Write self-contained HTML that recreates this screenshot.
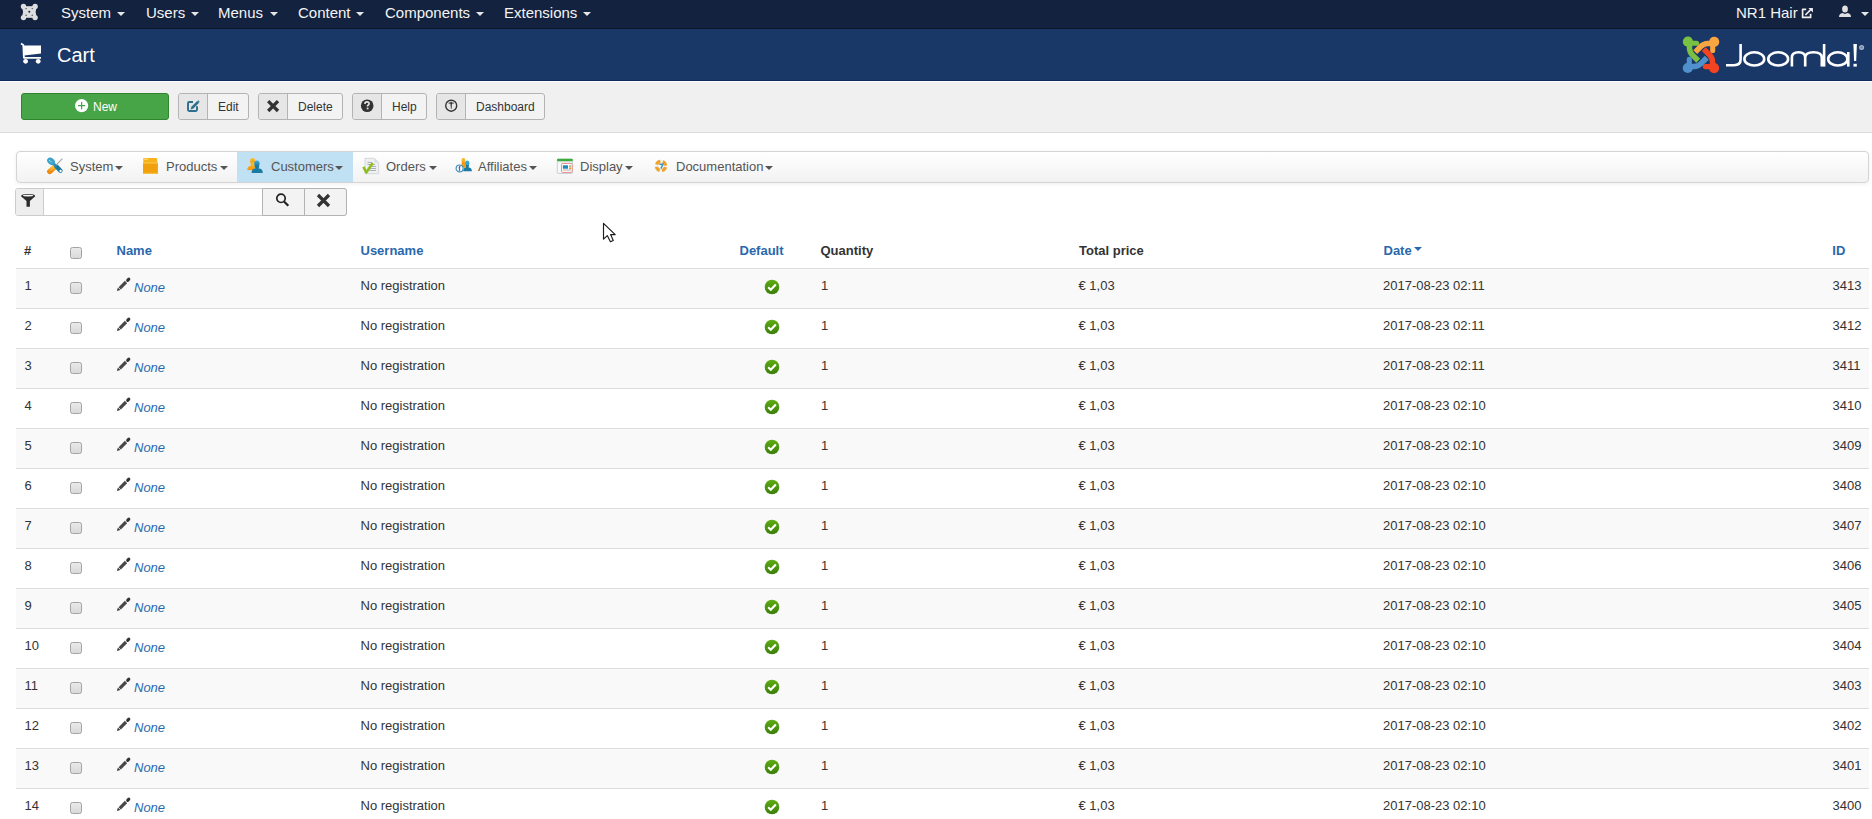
<!DOCTYPE html>
<html><head><meta charset="utf-8"><title>Cart</title>
<style>
html,body{margin:0;padding:0;}
body{width:1872px;height:819px;overflow:hidden;position:relative;background:#fff;font-family:"Liberation Sans", sans-serif;}
.t{position:absolute;white-space:nowrap;line-height:1;}
.caret{position:absolute;width:0;height:0;border-top:4px solid #000;border-left:4px solid transparent;border-right:4px solid transparent;}
.btn{position:absolute;border:1px solid #b3b3b3;border-radius:3px;background:#f3f3f3;}
svg{overflow:visible}
</style></head><body>
<div style="position:absolute;left:0;top:0;width:1872px;height:28px;background:#13223f"></div>
<div style="position:absolute;left:0;top:28px;width:1872px;height:1px;background:#0b1628"></div>
<svg style="position:absolute;left:0;top:0" width="60" height="28" viewBox="0 0 60 28"><rect x="22.4" y="6.2" width="13.8" height="11.6" fill="#dedede"/><circle cx="29.3" cy="1.5" r="4.6" fill="#13223f"/><circle cx="29.3" cy="22.5" r="4.6" fill="#13223f"/><circle cx="18.4" cy="12" r="4.6" fill="#13223f"/><circle cx="40.2" cy="12" r="4.6" fill="#13223f"/><circle cx="23.5" cy="6.4" r="2.7" fill="#dedede"/><circle cx="35.1" cy="6.4" r="2.7" fill="#dedede"/><circle cx="23.5" cy="17.6" r="2.7" fill="#dedede"/><circle cx="35.1" cy="17.6" r="2.7" fill="#dedede"/><circle cx="29.3" cy="11.8" r="1" fill="#13223f"/><circle cx="26.1" cy="8.6" r="0.7" fill="#13223f" opacity="0.8"/><circle cx="32.2" cy="8.6" r="0.7" fill="#13223f" opacity="0.8"/><circle cx="26.1" cy="15.2" r="0.7" fill="#13223f" opacity="0.8"/><circle cx="32.2" cy="15.2" r="0.7" fill="#13223f" opacity="0.8"/></svg>
<div class="t" style="left:61px;top:4.5px;font-size:15px;color:#f4f4f4;font-weight:normal;font-style:normal;">System</div>
<div class="caret" style="left:117px;top:12px;border-top-color:#e6e6e6"></div>
<div class="t" style="left:146px;top:4.5px;font-size:15px;color:#f4f4f4;font-weight:normal;font-style:normal;">Users</div>
<div class="caret" style="left:191px;top:12px;border-top-color:#e6e6e6"></div>
<div class="t" style="left:218px;top:4.5px;font-size:15px;color:#f4f4f4;font-weight:normal;font-style:normal;">Menus</div>
<div class="caret" style="left:270px;top:12px;border-top-color:#e6e6e6"></div>
<div class="t" style="left:298px;top:4.5px;font-size:15px;color:#f4f4f4;font-weight:normal;font-style:normal;">Content</div>
<div class="caret" style="left:356px;top:12px;border-top-color:#e6e6e6"></div>
<div class="t" style="left:385px;top:4.5px;font-size:15px;color:#f4f4f4;font-weight:normal;font-style:normal;">Components</div>
<div class="caret" style="left:476px;top:12px;border-top-color:#e6e6e6"></div>
<div class="t" style="left:504px;top:4.5px;font-size:15px;color:#f4f4f4;font-weight:normal;font-style:normal;">Extensions</div>
<div class="caret" style="left:583px;top:12px;border-top-color:#e6e6e6"></div>
<div class="t" style="left:1736px;top:5px;font-size:15px;color:#f4f4f4;font-weight:normal;font-style:normal;">NR1 Hair</div>
<svg style="position:absolute;left:1800px;top:6px" width="16" height="14" viewBox="0 0 16 14"><path d="M6.2 3.4 H2.6 V11.4 H10.6 V7.8" stroke="#eee" stroke-width="1.7" fill="none" stroke-linejoin="round"/><path d="M5.4 9 L11 3.4" stroke="#eee" stroke-width="1.7"/><path d="M8.4 1.9 H12.9 V6.4 Z" fill="#eee"/></svg>
<svg style="position:absolute;left:1838px;top:5px" width="15" height="13" viewBox="0 0 15 13"><ellipse cx="7" cy="4" rx="2.9" ry="3.6" fill="#e0e0e0"/><path d="M1 12 Q1 8.5 4.5 8 L7 9 L9.5 8 Q13 8.5 13 12 Z" fill="#e0e0e0"/></svg>
<div class="caret" style="left:1861px;top:12px;border-top-color:#e6e6e6"></div>
<div style="position:absolute;left:0;top:29px;width:1872px;height:51px;background:#1a3867"></div>
<div style="position:absolute;left:0;top:80px;width:1872px;height:1px;background:#0f2b5b"></div>
<div style="position:absolute;left:0;top:81px;width:1872px;height:1px;background:#fcfcfa"></div>
<svg style="position:absolute;left:18px;top:40px" width="26" height="26" viewBox="18 40 26 26"><path d="M21 43.5 L23.3 45 L23.8 56 L24 57.8 H41" stroke="#fff" stroke-width="1.8" fill="none" stroke-linejoin="round"/><path d="M23.3 45.5 H41 V53.5 L24 55.5 Z" fill="#fff"/><circle cx="25.6" cy="61.3" r="2.4" fill="#fff"/><circle cx="38.2" cy="61.3" r="2.4" fill="#fff"/></svg>
<div class="t" style="left:57px;top:45px;font-size:20px;color:#fff;font-weight:normal;font-style:normal;">Cart</div>
<svg style="position:absolute;left:1676px;top:29px" width="196" height="51" viewBox="1676 29 196 51"><g transform="translate(1701 54.9) scale(1.0)"><g transform="rotate(0)" fill="#7ac143" stroke="#7ac143"><circle cx="-13.1" cy="-13.2" r="5.1" stroke="none"/><path d="M-13 -11.7 L-4.4 -11.7" stroke-width="5.1" fill="none" stroke-linecap="round"/><path d="M-11.5 -13 L-11.5 -6.9 Q-11.5 -2.9 -8.67 -0.07 L-2.8 5.8" stroke-width="5.5" fill="none" stroke-linejoin="round"/></g><g transform="rotate(90)" fill="#f9a541" stroke="#f9a541"><circle cx="-13.1" cy="-13.2" r="5.1" stroke="none"/><path d="M-13 -11.7 L-4.4 -11.7" stroke-width="5.1" fill="none" stroke-linecap="round"/><path d="M-11.5 -13 L-11.5 -6.9 Q-11.5 -2.9 -8.67 -0.07 L-2.8 5.8" stroke-width="5.5" fill="none" stroke-linejoin="round"/></g><g transform="rotate(180)" fill="#f44321" stroke="#f44321"><circle cx="-13.1" cy="-13.2" r="5.1" stroke="none"/><path d="M-13 -11.7 L-4.4 -11.7" stroke-width="5.1" fill="none" stroke-linecap="round"/><path d="M-11.5 -13 L-11.5 -6.9 Q-11.5 -2.9 -8.67 -0.07 L-2.8 5.8" stroke-width="5.5" fill="none" stroke-linejoin="round"/></g><g transform="rotate(270)" fill="#5091cd" stroke="#5091cd"><circle cx="-13.1" cy="-13.2" r="5.1" stroke="none"/><path d="M-13 -11.7 L-4.4 -11.7" stroke-width="5.1" fill="none" stroke-linecap="round"/><path d="M-11.5 -13 L-11.5 -6.9 Q-11.5 -2.9 -8.67 -0.07 L-2.8 5.8" stroke-width="5.5" fill="none" stroke-linejoin="round"/></g></g><g stroke="#fff" fill="none" stroke-width="2.6"><path d="M1740.6 44 V59.5 Q1740.6 65.2 1734 65.2 H1726"/><ellipse cx="1754.3" cy="58.9" rx="9.9" ry="6.6"/><ellipse cx="1778.2" cy="58.9" rx="9.9" ry="6.6"/><path d="M1791.9 66.6 V57.5 Q1791.9 52.3 1798.5 52.3 Q1805.2 52.3 1805.2 57.5 V66.6 M1805.2 57.5 Q1805.2 52.3 1813.5 52.3 Q1821.8 52.3 1821.8 57.5 V66.6"/><path d="M1824.1 44 V66.6"/><ellipse cx="1837.8" cy="58.9" rx="9.6" ry="6.6"/><path d="M1848.3 52 V66.6"/></g><path d="M1853.4 44 H1856.9 L1856.2 61 H1854.1 Z" fill="#fff"/><rect x="1853.5" y="63.8" width="3.3" height="2.8" fill="#fff"/><circle cx="1861.6" cy="47.4" r="2.5" fill="#aab6c8"/><circle cx="1861.6" cy="47.4" r="1.2" fill="#6f819f"/></svg>
<div style="position:absolute;left:0;top:82px;width:1872px;height:50px;background:#f0f0f0"></div>
<div style="position:absolute;left:0;top:132px;width:1872px;height:1px;background:#dcdcdc"></div>
<div class="btn" style="left:21px;top:93px;width:146px;height:25px;background:#47a447;border-color:#30852f"></div>
<svg style="position:absolute;left:74px;top:98px" width="16" height="16" viewBox="0 0 16 16"><circle cx="7.6" cy="7.6" r="6.6" fill="#fff"/><path d="M4 7.6 H11.2 M7.6 4 V11.2" stroke="#47a447" stroke-width="1.2"/></svg>
<div class="t" style="left:93px;top:101px;font-size:12px;color:#fff;font-weight:normal;font-style:normal;">New</div>
<div class="btn" style="left:178px;top:93px;width:69px;height:25px"></div><div style="position:absolute;left:179px;top:94px;width:28px;height:25px;background:#e6e6e6;border-right:1px solid #b3b3b3;border-radius:3px 0 0 3px"></div><svg style="position:absolute;left:185px;top:99px" width="16" height="16" viewBox="0 0 16 16"><path d="M8 3 H4.2 Q3 3 3 4.2 V10.8 Q3 12 4.2 12 H10.8 Q12 12 12 10.8 V7.2" stroke="#2b6e8d" stroke-width="1.9" fill="none"/><path d="M7 9 L13.2 2.8" stroke="#2b6e8d" stroke-width="2.6"/><path d="M5.6 10.4 L6.2 8 L8 9.8 Z" fill="#2b6e8d"/><path d="M12.6 2 L13.3 1.3 L14.7 2.7 L14 3.4 Z" fill="#2b6e8d"/></svg><div class="t" style="left:218px;top:101px;font-size:12px;color:#333;font-weight:normal;font-style:normal;">Edit</div>
<div class="btn" style="left:258px;top:93px;width:83px;height:25px"></div><div style="position:absolute;left:259px;top:94px;width:28px;height:25px;background:#e6e6e6;border-right:1px solid #b3b3b3;border-radius:3px 0 0 3px"></div><svg style="position:absolute;left:265px;top:98px" width="16" height="16" viewBox="0 0 16 16"><path d="M3.2 3.2 L13 13 M13 3.2 L3.2 13" stroke="#333" stroke-width="3.3"/></svg><div class="t" style="left:298px;top:101px;font-size:12px;color:#333;font-weight:normal;font-style:normal;">Delete</div>
<div class="btn" style="left:352px;top:93px;width:73px;height:25px"></div><div style="position:absolute;left:353px;top:94px;width:28px;height:25px;background:#e6e6e6;border-right:1px solid #b3b3b3;border-radius:3px 0 0 3px"></div><svg style="position:absolute;left:359px;top:98px" width="16" height="16" viewBox="0 0 16 16"><circle cx="8.2" cy="7.8" r="6.3" fill="#333"/><path d="M5.9 6 Q5.9 3.9 8 3.9 Q10.1 3.9 10.1 5.8 Q10.1 7 8.6 7.6 V8.6" stroke="#e6e6e6" stroke-width="1.6" fill="none"/><rect x="7.7" y="9.6" width="1.8" height="1.7" fill="#e6e6e6"/></svg><div class="t" style="left:392px;top:101px;font-size:12px;color:#333;font-weight:normal;font-style:normal;">Help</div>
<div class="btn" style="left:436px;top:93px;width:107px;height:25px"></div><div style="position:absolute;left:437px;top:94px;width:28px;height:25px;background:#e6e6e6;border-right:1px solid #b3b3b3;border-radius:3px 0 0 3px"></div><svg style="position:absolute;left:443px;top:98px" width="16" height="16" viewBox="0 0 16 16"><circle cx="8.2" cy="7.7" r="5.5" stroke="#333" stroke-width="1.4" fill="none"/><path d="M5.6 5.1 H10.8" stroke="#333" stroke-width="1"/><circle cx="8.2" cy="4.5" r="0.8" fill="#333"/><path d="M7.4 5 H9 L8.5 11 H7.9 Z" fill="#333"/></svg><div class="t" style="left:476px;top:101px;font-size:12px;color:#333;font-weight:normal;font-style:normal;">Dashboard</div>
<div style="position:absolute;left:16px;top:151px;width:1851px;height:30px;border:1px solid #d4d4d4;border-radius:4px;background:linear-gradient(#ffffff,#f2f2f2);box-shadow:0 1px 4px rgba(0,0,0,0.065)"></div>
<div style="position:absolute;left:237px;top:152px;width:116px;height:30px;background:#c0e0f4"></div>
<svg style="position:absolute;left:47px;top:158px" width="16" height="16" viewBox="0 0 16 16"><defs><linearGradient id="scr" x1="0" y1="0" x2="0" y2="1"><stop offset="0" stop-color="#fbbd35"/><stop offset="1" stop-color="#ef870c"/></linearGradient></defs><path d="M2.7 13.5 L7.4 9.3" stroke="url(#scr)" stroke-width="5.2" stroke-linecap="round"/><path d="M2.8 13.2 L6.6 9.8" stroke="#fcd98a" stroke-width="0.7" stroke-dasharray="0.9 1.1"/><path d="M9.2 8.2 L13.5 12.8" stroke="#1c7aa0" stroke-width="4.3" stroke-linecap="round"/><path d="M5.5 4.8 L9.5 8.5" stroke="#2a8db5" stroke-width="2.8"/><ellipse cx="4" cy="3.3" rx="4.2" ry="3.2" transform="rotate(40 4 3.3)" fill="#3aa2cb"/><path d="M2.2 2.2 L4.6 4.2" stroke="#c5e6f3" stroke-width="1.1" stroke-dasharray="1 0.9"/><path d="M9.2 6.8 L15.4 0.6" stroke="#a5a5a5" stroke-width="1.1"/><circle cx="13.6" cy="13" r="1.15" fill="#fff"/></svg>
<div class="t" style="left:70px;top:160px;font-size:13px;color:#555;font-weight:normal;font-style:normal;">System</div>
<div class="caret" style="left:115px;top:166px;border-top-color:#555"></div>
<svg style="position:absolute;left:143px;top:158px" width="16" height="16" viewBox="0 0 16 16"><path d="M0.3 -0.1 H13.2 Q14.2 0 14.2 1.2 V5 H0.3 Z" fill="#f7b21e"/><rect x="0.9" y="0.6" width="4" height="1.4" fill="#fbd46a"/><path d="M0 4.6 H14.9 V15.9 H0 Z" fill="#f0a10d"/><rect x="0" y="4.4" width="14.9" height="1.2" fill="#fcc94a"/><rect x="0" y="14.8" width="14.9" height="1.1" fill="#f8c23c"/></svg>
<div class="t" style="left:166px;top:160px;font-size:13px;color:#555;font-weight:normal;font-style:normal;">Products</div>
<div class="caret" style="left:220px;top:166px;border-top-color:#555"></div>
<svg style="position:absolute;left:247px;top:158px" width="16" height="16" viewBox="0 0 16 16"><defs><linearGradient id="cbl" x1="0" y1="0" x2="0" y2="1"><stop offset="0" stop-color="#3bb0dc"/><stop offset="1" stop-color="#146e94"/></linearGradient><linearGradient id="cor" x1="0" y1="0" x2="0" y2="1"><stop offset="0" stop-color="#fbc02d"/><stop offset="1" stop-color="#f3930e"/></linearGradient></defs><ellipse cx="5.6" cy="2.9" rx="2.5" ry="2.8" fill="url(#cor)"/><path d="M3.5 4.5 Q2.8 6.5 4.2 7.6 Q0.3 8.3 0.2 12 L6 12.3 L8.5 9.5 Q7.8 7.8 7 7.6 Q8.4 6.5 7.7 4.5 Z" fill="url(#cor)"/><ellipse cx="9.9" cy="5.6" rx="2.7" ry="3.1" fill="url(#cbl)"/><path d="M7.8 7.5 Q7.4 9.3 8.6 10.2 Q4.6 10.6 4.6 14.9 H15.8 Q15.8 10.6 11.4 10.2 Q12.6 9.3 12 7.5 Z" fill="#1a7aa2"/></svg>
<div class="t" style="left:271px;top:160px;font-size:13px;color:#555;font-weight:normal;font-style:normal;">Customers</div>
<div class="caret" style="left:335px;top:166px;border-top-color:#555"></div>
<svg style="position:absolute;left:363px;top:158px" width="16" height="16" viewBox="0 0 16 16"><path d="M2 0.3 H11.5 L15.6 4.4 V15.7 H2 Z" fill="#eef0f2" stroke="#c6ccd1" stroke-width="0.7"/><path d="M11.5 0.3 V4.4 H15.6 Z" fill="#d5dde3"/><path d="M4.5 4.4 H9 M4.5 6.5 H12 M8 8.5 H13 M7 10.5 H13 M6.5 12.5 H13" stroke="#8d949a" stroke-width="0.7"/><path d="M0.4 8.8 L3.3 14.5 L9.7 5" stroke="#8fbe22" stroke-width="2.6" fill="none" stroke-linejoin="round"/></svg>
<div class="t" style="left:386px;top:160px;font-size:13px;color:#555;font-weight:normal;font-style:normal;">Orders</div>
<div class="caret" style="left:429px;top:166px;border-top-color:#555"></div>
<svg style="position:absolute;left:456px;top:158px" width="16" height="16" viewBox="0 0 16 16"><ellipse cx="7.4" cy="2.2" rx="1.9" ry="2.2" fill="#f8b626"/><path d="M5.8 3.5 Q5.2 6 6 8 L8.8 11 L9.2 6 Q9 4 8.5 3.5 Z" fill="#f39a12"/><ellipse cx="11.2" cy="5.2" rx="2.2" ry="2.6" fill="#34a6d3"/><path d="M9.4 7 Q9.2 8.5 10 9.2 Q7.2 9.8 7.2 13.2 H15.9 Q15.9 9.8 12.4 9.2 Q13.2 8.5 13 7 Z" fill="#1a7aa2"/><circle cx="3.6" cy="10.5" r="3.5" fill="#f7fafc" stroke="#3f8db8" stroke-width="1.1"/><path d="M4.6 8.6 Q2.4 8.6 3.2 10.3 Q4.6 11.6 2.6 12.6 M3.6 7.8 V13.4" stroke="#2a62a0" stroke-width="0.8" fill="none"/></svg>
<div class="t" style="left:478px;top:160px;font-size:13px;color:#555;font-weight:normal;font-style:normal;">Affiliates</div>
<div class="caret" style="left:529px;top:166px;border-top-color:#555"></div>
<svg style="position:absolute;left:557px;top:158px" width="16" height="16" viewBox="0 0 16 16"><rect x="0.3" y="1.2" width="15.3" height="14.3" rx="1" fill="#e9eef3" stroke="#b9c5ce" stroke-width="0.7"/><rect x="0" y="0.8" width="15.8" height="2.4" rx="1" fill="#3bab3b"/><rect x="1.2" y="4.5" width="2.4" height="10" fill="#fafafa"/><rect x="4.6" y="5.4" width="10.6" height="9" rx="1" fill="#fff" stroke="#ea8a8a" stroke-width="1"/><rect x="5.9" y="7.3" width="5.1" height="3.4" fill="#1f88bb"/><rect x="12" y="7.3" width="2" height="1.5" fill="#7cc361"/><rect x="12" y="9.4" width="2.2" height="1.6" fill="#f29a14"/><path d="M6 12 H14" stroke="#777" stroke-width="0.6"/></svg>
<div class="t" style="left:580px;top:160px;font-size:13px;color:#555;font-weight:normal;font-style:normal;">Display</div>
<div class="caret" style="left:625px;top:166px;border-top-color:#555"></div>
<svg style="position:absolute;left:653px;top:158px" width="16" height="16" viewBox="0 0 16 16"><circle cx="8" cy="8" r="4.6" stroke="#eef2f6" stroke-width="3.3" fill="none"/><circle cx="8" cy="8" r="4.6" stroke="#eea42a" stroke-width="3.3" stroke-dasharray="4.8 2.43" stroke-dashoffset="-1.2" fill="none"/><path d="M6.3 6.2 H9.9 L7.9 10.6" stroke="#3a93c6" stroke-width="1.5" fill="none"/></svg>
<div class="t" style="left:676px;top:160px;font-size:13px;color:#555;font-weight:normal;font-style:normal;">Documentation</div>
<div class="caret" style="left:765px;top:166px;border-top-color:#555"></div>
<div style="position:absolute;left:15px;top:188px;width:330px;height:26px;border:1px solid #ccc;border-radius:3px;background:#fff"></div>
<div style="position:absolute;left:16px;top:189px;width:27px;height:26px;background:#eee;border-right:1px solid #ccc;border-radius:3px 0 0 3px"></div>
<svg style="position:absolute;left:21px;top:194px" width="16" height="16" viewBox="0 0 16 16"><path d="M0 2.2 Q0 0 7.1 0 Q14.2 0 14.2 2.2 L8.9 7 V12.8 H5.5 V7 Z" fill="#2b2b2b"/><ellipse cx="7.1" cy="1.6" rx="5.2" ry="0.9" fill="#f5f5f5"/></svg>
<div style="position:absolute;left:262px;top:188px;width:83px;height:26px;border:1px solid #b3b3b3;border-radius:0 3px 3px 0;background:#f3f3f3"></div>
<div style="position:absolute;left:304px;top:189px;width:1px;height:26px;background:#b3b3b3"></div>
<svg style="position:absolute;left:274px;top:192px" width="18" height="18" viewBox="0 0 18 18"><circle cx="7" cy="6.3" r="4.2" stroke="#222" stroke-width="1.7" fill="none"/><path d="M10 9.5 L14.3 13.8" stroke="#222" stroke-width="2.2"/></svg>
<svg style="position:absolute;left:315px;top:192px" width="18" height="18" viewBox="0 0 18 18"><path d="M3 3 L14 14 M14 3 L3 14" stroke="#333" stroke-width="3.2"/></svg>
<svg style="position:absolute;left:590px;top:215px" width="40" height="35" viewBox="590 215 40 35"><path d="M603.5 223.3 V239.2 L607.3 235.6 L610.4 241.7 L613.3 240.4 L610.6 234.6 H615.2 Z" fill="#fff" stroke="#1c1c1c" stroke-width="1.15" stroke-linejoin="round"/></svg>
<div style="position:absolute;left:16px;top:268px;width:1853px;height:1px;background:#ddd"></div>
<div class="t" style="left:24px;top:243.8px;font-size:13px;color:#333;font-weight:bold;font-style:normal;">#</div>
<div style="position:absolute;left:70px;top:247px;width:10px;height:10px;border:1px solid #a3a3a3;border-radius:2.5px;background:linear-gradient(#e9e9e9,#dadada)"></div>
<div class="t" style="left:116.5px;top:243.8px;font-size:13px;color:#2a68ad;font-weight:bold;font-style:normal;">Name</div>
<div class="t" style="left:360.5px;top:243.8px;font-size:13px;color:#2a68ad;font-weight:bold;font-style:normal;">Username</div>
<div class="t" style="left:739.5px;top:243.8px;font-size:13px;color:#2a68ad;font-weight:bold;font-style:normal;">Default</div>
<div class="t" style="left:820.5px;top:243.8px;font-size:13px;color:#333;font-weight:bold;font-style:normal;">Quantity</div>
<div class="t" style="left:1079px;top:243.8px;font-size:13px;color:#333;font-weight:bold;font-style:normal;">Total price</div>
<div class="t" style="left:1383.5px;top:243.8px;font-size:13px;color:#2a68ad;font-weight:bold;font-style:normal;">Date</div>
<div class="caret" style="left:1414px;top:247px;border-top-color:#2a68ad"></div>
<div class="t" style="left:1832.3px;top:243.8px;font-size:13px;color:#2a68ad;font-weight:bold;font-style:normal;">ID</div>
<div style="position:absolute;left:16px;top:269px;width:1853px;height:39px;background:#f9f9f9"></div>
<div style="position:absolute;left:16px;top:308px;width:1853px;height:1px;background:#ddd"></div>
<div class="t" style="left:24.5px;top:279px;font-size:13px;color:#333;font-weight:normal;font-style:normal;">1</div>
<div style="position:absolute;left:70px;top:282px;width:10px;height:10px;border:1px solid #a3a3a3;border-radius:2.5px;background:linear-gradient(#e9e9e9,#dadada)"></div>
<svg style="position:absolute;left:116px;top:277px" width="15" height="15" viewBox="0 0 15 15"><path d="M0.9 14 L1.9 10.6 L4.4 13.1 Z" fill="#3a3a3a"/><path d="M3.72 11.28 L10 5" stroke="#484848" stroke-width="3.2"/><path d="M11.67 3.33 L12.8 2.2" stroke="#333" stroke-width="3.1" stroke-linecap="round"/></svg>
<div class="t" style="left:134px;top:281px;font-size:13px;color:#2a68ad;font-weight:normal;font-style:italic;">None</div>
<div class="t" style="left:360.5px;top:279px;font-size:13px;color:#333;font-weight:normal;font-style:normal;">No registration</div>
<svg style="position:absolute;left:764px;top:279px" width="16" height="16" viewBox="0 0 16 16"><defs><linearGradient id="g0" x1="0" y1="0" x2="0" y2="1"><stop offset="0" stop-color="#5eae12"/><stop offset="1" stop-color="#3a7d0b"/></linearGradient></defs><circle cx="8" cy="8" r="7.3" fill="url(#g0)"/><path d="M4.2 8.3 L6.8 10.7 L11.8 5.6" stroke="#fff" stroke-width="2.2" fill="none"/></svg>
<div class="t" style="left:821px;top:279px;font-size:13px;color:#333;font-weight:normal;font-style:normal;">1</div>
<div class="t" style="left:1078.5px;top:279px;font-size:13px;color:#333;font-weight:normal;font-style:normal;">&euro; 1,03</div>
<div class="t" style="left:1383px;top:279px;font-size:13px;color:#333;font-weight:normal;font-style:normal;">2017-08-23 02:11</div>
<div class="t" style="left:1832.5px;top:279px;font-size:13px;color:#333;font-weight:normal;font-style:normal;">3413</div>
<div style="position:absolute;left:16px;top:348px;width:1853px;height:1px;background:#ddd"></div>
<div class="t" style="left:24.5px;top:319px;font-size:13px;color:#333;font-weight:normal;font-style:normal;">2</div>
<div style="position:absolute;left:70px;top:322px;width:10px;height:10px;border:1px solid #a3a3a3;border-radius:2.5px;background:linear-gradient(#e9e9e9,#dadada)"></div>
<svg style="position:absolute;left:116px;top:317px" width="15" height="15" viewBox="0 0 15 15"><path d="M0.9 14 L1.9 10.6 L4.4 13.1 Z" fill="#3a3a3a"/><path d="M3.72 11.28 L10 5" stroke="#484848" stroke-width="3.2"/><path d="M11.67 3.33 L12.8 2.2" stroke="#333" stroke-width="3.1" stroke-linecap="round"/></svg>
<div class="t" style="left:134px;top:321px;font-size:13px;color:#2a68ad;font-weight:normal;font-style:italic;">None</div>
<div class="t" style="left:360.5px;top:319px;font-size:13px;color:#333;font-weight:normal;font-style:normal;">No registration</div>
<svg style="position:absolute;left:764px;top:319px" width="16" height="16" viewBox="0 0 16 16"><defs><linearGradient id="g1" x1="0" y1="0" x2="0" y2="1"><stop offset="0" stop-color="#5eae12"/><stop offset="1" stop-color="#3a7d0b"/></linearGradient></defs><circle cx="8" cy="8" r="7.3" fill="url(#g1)"/><path d="M4.2 8.3 L6.8 10.7 L11.8 5.6" stroke="#fff" stroke-width="2.2" fill="none"/></svg>
<div class="t" style="left:821px;top:319px;font-size:13px;color:#333;font-weight:normal;font-style:normal;">1</div>
<div class="t" style="left:1078.5px;top:319px;font-size:13px;color:#333;font-weight:normal;font-style:normal;">&euro; 1,03</div>
<div class="t" style="left:1383px;top:319px;font-size:13px;color:#333;font-weight:normal;font-style:normal;">2017-08-23 02:11</div>
<div class="t" style="left:1832.5px;top:319px;font-size:13px;color:#333;font-weight:normal;font-style:normal;">3412</div>
<div style="position:absolute;left:16px;top:349px;width:1853px;height:39px;background:#f9f9f9"></div>
<div style="position:absolute;left:16px;top:388px;width:1853px;height:1px;background:#ddd"></div>
<div class="t" style="left:24.5px;top:359px;font-size:13px;color:#333;font-weight:normal;font-style:normal;">3</div>
<div style="position:absolute;left:70px;top:362px;width:10px;height:10px;border:1px solid #a3a3a3;border-radius:2.5px;background:linear-gradient(#e9e9e9,#dadada)"></div>
<svg style="position:absolute;left:116px;top:357px" width="15" height="15" viewBox="0 0 15 15"><path d="M0.9 14 L1.9 10.6 L4.4 13.1 Z" fill="#3a3a3a"/><path d="M3.72 11.28 L10 5" stroke="#484848" stroke-width="3.2"/><path d="M11.67 3.33 L12.8 2.2" stroke="#333" stroke-width="3.1" stroke-linecap="round"/></svg>
<div class="t" style="left:134px;top:361px;font-size:13px;color:#2a68ad;font-weight:normal;font-style:italic;">None</div>
<div class="t" style="left:360.5px;top:359px;font-size:13px;color:#333;font-weight:normal;font-style:normal;">No registration</div>
<svg style="position:absolute;left:764px;top:359px" width="16" height="16" viewBox="0 0 16 16"><defs><linearGradient id="g2" x1="0" y1="0" x2="0" y2="1"><stop offset="0" stop-color="#5eae12"/><stop offset="1" stop-color="#3a7d0b"/></linearGradient></defs><circle cx="8" cy="8" r="7.3" fill="url(#g2)"/><path d="M4.2 8.3 L6.8 10.7 L11.8 5.6" stroke="#fff" stroke-width="2.2" fill="none"/></svg>
<div class="t" style="left:821px;top:359px;font-size:13px;color:#333;font-weight:normal;font-style:normal;">1</div>
<div class="t" style="left:1078.5px;top:359px;font-size:13px;color:#333;font-weight:normal;font-style:normal;">&euro; 1,03</div>
<div class="t" style="left:1383px;top:359px;font-size:13px;color:#333;font-weight:normal;font-style:normal;">2017-08-23 02:11</div>
<div class="t" style="left:1832.5px;top:359px;font-size:13px;color:#333;font-weight:normal;font-style:normal;">3411</div>
<div style="position:absolute;left:16px;top:428px;width:1853px;height:1px;background:#ddd"></div>
<div class="t" style="left:24.5px;top:399px;font-size:13px;color:#333;font-weight:normal;font-style:normal;">4</div>
<div style="position:absolute;left:70px;top:402px;width:10px;height:10px;border:1px solid #a3a3a3;border-radius:2.5px;background:linear-gradient(#e9e9e9,#dadada)"></div>
<svg style="position:absolute;left:116px;top:397px" width="15" height="15" viewBox="0 0 15 15"><path d="M0.9 14 L1.9 10.6 L4.4 13.1 Z" fill="#3a3a3a"/><path d="M3.72 11.28 L10 5" stroke="#484848" stroke-width="3.2"/><path d="M11.67 3.33 L12.8 2.2" stroke="#333" stroke-width="3.1" stroke-linecap="round"/></svg>
<div class="t" style="left:134px;top:401px;font-size:13px;color:#2a68ad;font-weight:normal;font-style:italic;">None</div>
<div class="t" style="left:360.5px;top:399px;font-size:13px;color:#333;font-weight:normal;font-style:normal;">No registration</div>
<svg style="position:absolute;left:764px;top:399px" width="16" height="16" viewBox="0 0 16 16"><defs><linearGradient id="g3" x1="0" y1="0" x2="0" y2="1"><stop offset="0" stop-color="#5eae12"/><stop offset="1" stop-color="#3a7d0b"/></linearGradient></defs><circle cx="8" cy="8" r="7.3" fill="url(#g3)"/><path d="M4.2 8.3 L6.8 10.7 L11.8 5.6" stroke="#fff" stroke-width="2.2" fill="none"/></svg>
<div class="t" style="left:821px;top:399px;font-size:13px;color:#333;font-weight:normal;font-style:normal;">1</div>
<div class="t" style="left:1078.5px;top:399px;font-size:13px;color:#333;font-weight:normal;font-style:normal;">&euro; 1,03</div>
<div class="t" style="left:1383px;top:399px;font-size:13px;color:#333;font-weight:normal;font-style:normal;">2017-08-23 02:10</div>
<div class="t" style="left:1832.5px;top:399px;font-size:13px;color:#333;font-weight:normal;font-style:normal;">3410</div>
<div style="position:absolute;left:16px;top:429px;width:1853px;height:39px;background:#f9f9f9"></div>
<div style="position:absolute;left:16px;top:468px;width:1853px;height:1px;background:#ddd"></div>
<div class="t" style="left:24.5px;top:439px;font-size:13px;color:#333;font-weight:normal;font-style:normal;">5</div>
<div style="position:absolute;left:70px;top:442px;width:10px;height:10px;border:1px solid #a3a3a3;border-radius:2.5px;background:linear-gradient(#e9e9e9,#dadada)"></div>
<svg style="position:absolute;left:116px;top:437px" width="15" height="15" viewBox="0 0 15 15"><path d="M0.9 14 L1.9 10.6 L4.4 13.1 Z" fill="#3a3a3a"/><path d="M3.72 11.28 L10 5" stroke="#484848" stroke-width="3.2"/><path d="M11.67 3.33 L12.8 2.2" stroke="#333" stroke-width="3.1" stroke-linecap="round"/></svg>
<div class="t" style="left:134px;top:441px;font-size:13px;color:#2a68ad;font-weight:normal;font-style:italic;">None</div>
<div class="t" style="left:360.5px;top:439px;font-size:13px;color:#333;font-weight:normal;font-style:normal;">No registration</div>
<svg style="position:absolute;left:764px;top:439px" width="16" height="16" viewBox="0 0 16 16"><defs><linearGradient id="g4" x1="0" y1="0" x2="0" y2="1"><stop offset="0" stop-color="#5eae12"/><stop offset="1" stop-color="#3a7d0b"/></linearGradient></defs><circle cx="8" cy="8" r="7.3" fill="url(#g4)"/><path d="M4.2 8.3 L6.8 10.7 L11.8 5.6" stroke="#fff" stroke-width="2.2" fill="none"/></svg>
<div class="t" style="left:821px;top:439px;font-size:13px;color:#333;font-weight:normal;font-style:normal;">1</div>
<div class="t" style="left:1078.5px;top:439px;font-size:13px;color:#333;font-weight:normal;font-style:normal;">&euro; 1,03</div>
<div class="t" style="left:1383px;top:439px;font-size:13px;color:#333;font-weight:normal;font-style:normal;">2017-08-23 02:10</div>
<div class="t" style="left:1832.5px;top:439px;font-size:13px;color:#333;font-weight:normal;font-style:normal;">3409</div>
<div style="position:absolute;left:16px;top:508px;width:1853px;height:1px;background:#ddd"></div>
<div class="t" style="left:24.5px;top:479px;font-size:13px;color:#333;font-weight:normal;font-style:normal;">6</div>
<div style="position:absolute;left:70px;top:482px;width:10px;height:10px;border:1px solid #a3a3a3;border-radius:2.5px;background:linear-gradient(#e9e9e9,#dadada)"></div>
<svg style="position:absolute;left:116px;top:477px" width="15" height="15" viewBox="0 0 15 15"><path d="M0.9 14 L1.9 10.6 L4.4 13.1 Z" fill="#3a3a3a"/><path d="M3.72 11.28 L10 5" stroke="#484848" stroke-width="3.2"/><path d="M11.67 3.33 L12.8 2.2" stroke="#333" stroke-width="3.1" stroke-linecap="round"/></svg>
<div class="t" style="left:134px;top:481px;font-size:13px;color:#2a68ad;font-weight:normal;font-style:italic;">None</div>
<div class="t" style="left:360.5px;top:479px;font-size:13px;color:#333;font-weight:normal;font-style:normal;">No registration</div>
<svg style="position:absolute;left:764px;top:479px" width="16" height="16" viewBox="0 0 16 16"><defs><linearGradient id="g5" x1="0" y1="0" x2="0" y2="1"><stop offset="0" stop-color="#5eae12"/><stop offset="1" stop-color="#3a7d0b"/></linearGradient></defs><circle cx="8" cy="8" r="7.3" fill="url(#g5)"/><path d="M4.2 8.3 L6.8 10.7 L11.8 5.6" stroke="#fff" stroke-width="2.2" fill="none"/></svg>
<div class="t" style="left:821px;top:479px;font-size:13px;color:#333;font-weight:normal;font-style:normal;">1</div>
<div class="t" style="left:1078.5px;top:479px;font-size:13px;color:#333;font-weight:normal;font-style:normal;">&euro; 1,03</div>
<div class="t" style="left:1383px;top:479px;font-size:13px;color:#333;font-weight:normal;font-style:normal;">2017-08-23 02:10</div>
<div class="t" style="left:1832.5px;top:479px;font-size:13px;color:#333;font-weight:normal;font-style:normal;">3408</div>
<div style="position:absolute;left:16px;top:509px;width:1853px;height:39px;background:#f9f9f9"></div>
<div style="position:absolute;left:16px;top:548px;width:1853px;height:1px;background:#ddd"></div>
<div class="t" style="left:24.5px;top:519px;font-size:13px;color:#333;font-weight:normal;font-style:normal;">7</div>
<div style="position:absolute;left:70px;top:522px;width:10px;height:10px;border:1px solid #a3a3a3;border-radius:2.5px;background:linear-gradient(#e9e9e9,#dadada)"></div>
<svg style="position:absolute;left:116px;top:517px" width="15" height="15" viewBox="0 0 15 15"><path d="M0.9 14 L1.9 10.6 L4.4 13.1 Z" fill="#3a3a3a"/><path d="M3.72 11.28 L10 5" stroke="#484848" stroke-width="3.2"/><path d="M11.67 3.33 L12.8 2.2" stroke="#333" stroke-width="3.1" stroke-linecap="round"/></svg>
<div class="t" style="left:134px;top:521px;font-size:13px;color:#2a68ad;font-weight:normal;font-style:italic;">None</div>
<div class="t" style="left:360.5px;top:519px;font-size:13px;color:#333;font-weight:normal;font-style:normal;">No registration</div>
<svg style="position:absolute;left:764px;top:519px" width="16" height="16" viewBox="0 0 16 16"><defs><linearGradient id="g6" x1="0" y1="0" x2="0" y2="1"><stop offset="0" stop-color="#5eae12"/><stop offset="1" stop-color="#3a7d0b"/></linearGradient></defs><circle cx="8" cy="8" r="7.3" fill="url(#g6)"/><path d="M4.2 8.3 L6.8 10.7 L11.8 5.6" stroke="#fff" stroke-width="2.2" fill="none"/></svg>
<div class="t" style="left:821px;top:519px;font-size:13px;color:#333;font-weight:normal;font-style:normal;">1</div>
<div class="t" style="left:1078.5px;top:519px;font-size:13px;color:#333;font-weight:normal;font-style:normal;">&euro; 1,03</div>
<div class="t" style="left:1383px;top:519px;font-size:13px;color:#333;font-weight:normal;font-style:normal;">2017-08-23 02:10</div>
<div class="t" style="left:1832.5px;top:519px;font-size:13px;color:#333;font-weight:normal;font-style:normal;">3407</div>
<div style="position:absolute;left:16px;top:588px;width:1853px;height:1px;background:#ddd"></div>
<div class="t" style="left:24.5px;top:559px;font-size:13px;color:#333;font-weight:normal;font-style:normal;">8</div>
<div style="position:absolute;left:70px;top:562px;width:10px;height:10px;border:1px solid #a3a3a3;border-radius:2.5px;background:linear-gradient(#e9e9e9,#dadada)"></div>
<svg style="position:absolute;left:116px;top:557px" width="15" height="15" viewBox="0 0 15 15"><path d="M0.9 14 L1.9 10.6 L4.4 13.1 Z" fill="#3a3a3a"/><path d="M3.72 11.28 L10 5" stroke="#484848" stroke-width="3.2"/><path d="M11.67 3.33 L12.8 2.2" stroke="#333" stroke-width="3.1" stroke-linecap="round"/></svg>
<div class="t" style="left:134px;top:561px;font-size:13px;color:#2a68ad;font-weight:normal;font-style:italic;">None</div>
<div class="t" style="left:360.5px;top:559px;font-size:13px;color:#333;font-weight:normal;font-style:normal;">No registration</div>
<svg style="position:absolute;left:764px;top:559px" width="16" height="16" viewBox="0 0 16 16"><defs><linearGradient id="g7" x1="0" y1="0" x2="0" y2="1"><stop offset="0" stop-color="#5eae12"/><stop offset="1" stop-color="#3a7d0b"/></linearGradient></defs><circle cx="8" cy="8" r="7.3" fill="url(#g7)"/><path d="M4.2 8.3 L6.8 10.7 L11.8 5.6" stroke="#fff" stroke-width="2.2" fill="none"/></svg>
<div class="t" style="left:821px;top:559px;font-size:13px;color:#333;font-weight:normal;font-style:normal;">1</div>
<div class="t" style="left:1078.5px;top:559px;font-size:13px;color:#333;font-weight:normal;font-style:normal;">&euro; 1,03</div>
<div class="t" style="left:1383px;top:559px;font-size:13px;color:#333;font-weight:normal;font-style:normal;">2017-08-23 02:10</div>
<div class="t" style="left:1832.5px;top:559px;font-size:13px;color:#333;font-weight:normal;font-style:normal;">3406</div>
<div style="position:absolute;left:16px;top:589px;width:1853px;height:39px;background:#f9f9f9"></div>
<div style="position:absolute;left:16px;top:628px;width:1853px;height:1px;background:#ddd"></div>
<div class="t" style="left:24.5px;top:599px;font-size:13px;color:#333;font-weight:normal;font-style:normal;">9</div>
<div style="position:absolute;left:70px;top:602px;width:10px;height:10px;border:1px solid #a3a3a3;border-radius:2.5px;background:linear-gradient(#e9e9e9,#dadada)"></div>
<svg style="position:absolute;left:116px;top:597px" width="15" height="15" viewBox="0 0 15 15"><path d="M0.9 14 L1.9 10.6 L4.4 13.1 Z" fill="#3a3a3a"/><path d="M3.72 11.28 L10 5" stroke="#484848" stroke-width="3.2"/><path d="M11.67 3.33 L12.8 2.2" stroke="#333" stroke-width="3.1" stroke-linecap="round"/></svg>
<div class="t" style="left:134px;top:601px;font-size:13px;color:#2a68ad;font-weight:normal;font-style:italic;">None</div>
<div class="t" style="left:360.5px;top:599px;font-size:13px;color:#333;font-weight:normal;font-style:normal;">No registration</div>
<svg style="position:absolute;left:764px;top:599px" width="16" height="16" viewBox="0 0 16 16"><defs><linearGradient id="g8" x1="0" y1="0" x2="0" y2="1"><stop offset="0" stop-color="#5eae12"/><stop offset="1" stop-color="#3a7d0b"/></linearGradient></defs><circle cx="8" cy="8" r="7.3" fill="url(#g8)"/><path d="M4.2 8.3 L6.8 10.7 L11.8 5.6" stroke="#fff" stroke-width="2.2" fill="none"/></svg>
<div class="t" style="left:821px;top:599px;font-size:13px;color:#333;font-weight:normal;font-style:normal;">1</div>
<div class="t" style="left:1078.5px;top:599px;font-size:13px;color:#333;font-weight:normal;font-style:normal;">&euro; 1,03</div>
<div class="t" style="left:1383px;top:599px;font-size:13px;color:#333;font-weight:normal;font-style:normal;">2017-08-23 02:10</div>
<div class="t" style="left:1832.5px;top:599px;font-size:13px;color:#333;font-weight:normal;font-style:normal;">3405</div>
<div style="position:absolute;left:16px;top:668px;width:1853px;height:1px;background:#ddd"></div>
<div class="t" style="left:24.5px;top:639px;font-size:13px;color:#333;font-weight:normal;font-style:normal;">10</div>
<div style="position:absolute;left:70px;top:642px;width:10px;height:10px;border:1px solid #a3a3a3;border-radius:2.5px;background:linear-gradient(#e9e9e9,#dadada)"></div>
<svg style="position:absolute;left:116px;top:637px" width="15" height="15" viewBox="0 0 15 15"><path d="M0.9 14 L1.9 10.6 L4.4 13.1 Z" fill="#3a3a3a"/><path d="M3.72 11.28 L10 5" stroke="#484848" stroke-width="3.2"/><path d="M11.67 3.33 L12.8 2.2" stroke="#333" stroke-width="3.1" stroke-linecap="round"/></svg>
<div class="t" style="left:134px;top:641px;font-size:13px;color:#2a68ad;font-weight:normal;font-style:italic;">None</div>
<div class="t" style="left:360.5px;top:639px;font-size:13px;color:#333;font-weight:normal;font-style:normal;">No registration</div>
<svg style="position:absolute;left:764px;top:639px" width="16" height="16" viewBox="0 0 16 16"><defs><linearGradient id="g9" x1="0" y1="0" x2="0" y2="1"><stop offset="0" stop-color="#5eae12"/><stop offset="1" stop-color="#3a7d0b"/></linearGradient></defs><circle cx="8" cy="8" r="7.3" fill="url(#g9)"/><path d="M4.2 8.3 L6.8 10.7 L11.8 5.6" stroke="#fff" stroke-width="2.2" fill="none"/></svg>
<div class="t" style="left:821px;top:639px;font-size:13px;color:#333;font-weight:normal;font-style:normal;">1</div>
<div class="t" style="left:1078.5px;top:639px;font-size:13px;color:#333;font-weight:normal;font-style:normal;">&euro; 1,03</div>
<div class="t" style="left:1383px;top:639px;font-size:13px;color:#333;font-weight:normal;font-style:normal;">2017-08-23 02:10</div>
<div class="t" style="left:1832.5px;top:639px;font-size:13px;color:#333;font-weight:normal;font-style:normal;">3404</div>
<div style="position:absolute;left:16px;top:669px;width:1853px;height:39px;background:#f9f9f9"></div>
<div style="position:absolute;left:16px;top:708px;width:1853px;height:1px;background:#ddd"></div>
<div class="t" style="left:24.5px;top:679px;font-size:13px;color:#333;font-weight:normal;font-style:normal;">11</div>
<div style="position:absolute;left:70px;top:682px;width:10px;height:10px;border:1px solid #a3a3a3;border-radius:2.5px;background:linear-gradient(#e9e9e9,#dadada)"></div>
<svg style="position:absolute;left:116px;top:677px" width="15" height="15" viewBox="0 0 15 15"><path d="M0.9 14 L1.9 10.6 L4.4 13.1 Z" fill="#3a3a3a"/><path d="M3.72 11.28 L10 5" stroke="#484848" stroke-width="3.2"/><path d="M11.67 3.33 L12.8 2.2" stroke="#333" stroke-width="3.1" stroke-linecap="round"/></svg>
<div class="t" style="left:134px;top:681px;font-size:13px;color:#2a68ad;font-weight:normal;font-style:italic;">None</div>
<div class="t" style="left:360.5px;top:679px;font-size:13px;color:#333;font-weight:normal;font-style:normal;">No registration</div>
<svg style="position:absolute;left:764px;top:679px" width="16" height="16" viewBox="0 0 16 16"><defs><linearGradient id="g10" x1="0" y1="0" x2="0" y2="1"><stop offset="0" stop-color="#5eae12"/><stop offset="1" stop-color="#3a7d0b"/></linearGradient></defs><circle cx="8" cy="8" r="7.3" fill="url(#g10)"/><path d="M4.2 8.3 L6.8 10.7 L11.8 5.6" stroke="#fff" stroke-width="2.2" fill="none"/></svg>
<div class="t" style="left:821px;top:679px;font-size:13px;color:#333;font-weight:normal;font-style:normal;">1</div>
<div class="t" style="left:1078.5px;top:679px;font-size:13px;color:#333;font-weight:normal;font-style:normal;">&euro; 1,03</div>
<div class="t" style="left:1383px;top:679px;font-size:13px;color:#333;font-weight:normal;font-style:normal;">2017-08-23 02:10</div>
<div class="t" style="left:1832.5px;top:679px;font-size:13px;color:#333;font-weight:normal;font-style:normal;">3403</div>
<div style="position:absolute;left:16px;top:748px;width:1853px;height:1px;background:#ddd"></div>
<div class="t" style="left:24.5px;top:719px;font-size:13px;color:#333;font-weight:normal;font-style:normal;">12</div>
<div style="position:absolute;left:70px;top:722px;width:10px;height:10px;border:1px solid #a3a3a3;border-radius:2.5px;background:linear-gradient(#e9e9e9,#dadada)"></div>
<svg style="position:absolute;left:116px;top:717px" width="15" height="15" viewBox="0 0 15 15"><path d="M0.9 14 L1.9 10.6 L4.4 13.1 Z" fill="#3a3a3a"/><path d="M3.72 11.28 L10 5" stroke="#484848" stroke-width="3.2"/><path d="M11.67 3.33 L12.8 2.2" stroke="#333" stroke-width="3.1" stroke-linecap="round"/></svg>
<div class="t" style="left:134px;top:721px;font-size:13px;color:#2a68ad;font-weight:normal;font-style:italic;">None</div>
<div class="t" style="left:360.5px;top:719px;font-size:13px;color:#333;font-weight:normal;font-style:normal;">No registration</div>
<svg style="position:absolute;left:764px;top:719px" width="16" height="16" viewBox="0 0 16 16"><defs><linearGradient id="g11" x1="0" y1="0" x2="0" y2="1"><stop offset="0" stop-color="#5eae12"/><stop offset="1" stop-color="#3a7d0b"/></linearGradient></defs><circle cx="8" cy="8" r="7.3" fill="url(#g11)"/><path d="M4.2 8.3 L6.8 10.7 L11.8 5.6" stroke="#fff" stroke-width="2.2" fill="none"/></svg>
<div class="t" style="left:821px;top:719px;font-size:13px;color:#333;font-weight:normal;font-style:normal;">1</div>
<div class="t" style="left:1078.5px;top:719px;font-size:13px;color:#333;font-weight:normal;font-style:normal;">&euro; 1,03</div>
<div class="t" style="left:1383px;top:719px;font-size:13px;color:#333;font-weight:normal;font-style:normal;">2017-08-23 02:10</div>
<div class="t" style="left:1832.5px;top:719px;font-size:13px;color:#333;font-weight:normal;font-style:normal;">3402</div>
<div style="position:absolute;left:16px;top:749px;width:1853px;height:39px;background:#f9f9f9"></div>
<div style="position:absolute;left:16px;top:788px;width:1853px;height:1px;background:#ddd"></div>
<div class="t" style="left:24.5px;top:759px;font-size:13px;color:#333;font-weight:normal;font-style:normal;">13</div>
<div style="position:absolute;left:70px;top:762px;width:10px;height:10px;border:1px solid #a3a3a3;border-radius:2.5px;background:linear-gradient(#e9e9e9,#dadada)"></div>
<svg style="position:absolute;left:116px;top:757px" width="15" height="15" viewBox="0 0 15 15"><path d="M0.9 14 L1.9 10.6 L4.4 13.1 Z" fill="#3a3a3a"/><path d="M3.72 11.28 L10 5" stroke="#484848" stroke-width="3.2"/><path d="M11.67 3.33 L12.8 2.2" stroke="#333" stroke-width="3.1" stroke-linecap="round"/></svg>
<div class="t" style="left:134px;top:761px;font-size:13px;color:#2a68ad;font-weight:normal;font-style:italic;">None</div>
<div class="t" style="left:360.5px;top:759px;font-size:13px;color:#333;font-weight:normal;font-style:normal;">No registration</div>
<svg style="position:absolute;left:764px;top:759px" width="16" height="16" viewBox="0 0 16 16"><defs><linearGradient id="g12" x1="0" y1="0" x2="0" y2="1"><stop offset="0" stop-color="#5eae12"/><stop offset="1" stop-color="#3a7d0b"/></linearGradient></defs><circle cx="8" cy="8" r="7.3" fill="url(#g12)"/><path d="M4.2 8.3 L6.8 10.7 L11.8 5.6" stroke="#fff" stroke-width="2.2" fill="none"/></svg>
<div class="t" style="left:821px;top:759px;font-size:13px;color:#333;font-weight:normal;font-style:normal;">1</div>
<div class="t" style="left:1078.5px;top:759px;font-size:13px;color:#333;font-weight:normal;font-style:normal;">&euro; 1,03</div>
<div class="t" style="left:1383px;top:759px;font-size:13px;color:#333;font-weight:normal;font-style:normal;">2017-08-23 02:10</div>
<div class="t" style="left:1832.5px;top:759px;font-size:13px;color:#333;font-weight:normal;font-style:normal;">3401</div>
<div style="position:absolute;left:16px;top:828px;width:1853px;height:1px;background:#ddd"></div>
<div class="t" style="left:24.5px;top:799px;font-size:13px;color:#333;font-weight:normal;font-style:normal;">14</div>
<div style="position:absolute;left:70px;top:802px;width:10px;height:10px;border:1px solid #a3a3a3;border-radius:2.5px;background:linear-gradient(#e9e9e9,#dadada)"></div>
<svg style="position:absolute;left:116px;top:797px" width="15" height="15" viewBox="0 0 15 15"><path d="M0.9 14 L1.9 10.6 L4.4 13.1 Z" fill="#3a3a3a"/><path d="M3.72 11.28 L10 5" stroke="#484848" stroke-width="3.2"/><path d="M11.67 3.33 L12.8 2.2" stroke="#333" stroke-width="3.1" stroke-linecap="round"/></svg>
<div class="t" style="left:134px;top:801px;font-size:13px;color:#2a68ad;font-weight:normal;font-style:italic;">None</div>
<div class="t" style="left:360.5px;top:799px;font-size:13px;color:#333;font-weight:normal;font-style:normal;">No registration</div>
<svg style="position:absolute;left:764px;top:799px" width="16" height="16" viewBox="0 0 16 16"><defs><linearGradient id="g13" x1="0" y1="0" x2="0" y2="1"><stop offset="0" stop-color="#5eae12"/><stop offset="1" stop-color="#3a7d0b"/></linearGradient></defs><circle cx="8" cy="8" r="7.3" fill="url(#g13)"/><path d="M4.2 8.3 L6.8 10.7 L11.8 5.6" stroke="#fff" stroke-width="2.2" fill="none"/></svg>
<div class="t" style="left:821px;top:799px;font-size:13px;color:#333;font-weight:normal;font-style:normal;">1</div>
<div class="t" style="left:1078.5px;top:799px;font-size:13px;color:#333;font-weight:normal;font-style:normal;">&euro; 1,03</div>
<div class="t" style="left:1383px;top:799px;font-size:13px;color:#333;font-weight:normal;font-style:normal;">2017-08-23 02:10</div>
<div class="t" style="left:1832.5px;top:799px;font-size:13px;color:#333;font-weight:normal;font-style:normal;">3400</div>
</body></html>
